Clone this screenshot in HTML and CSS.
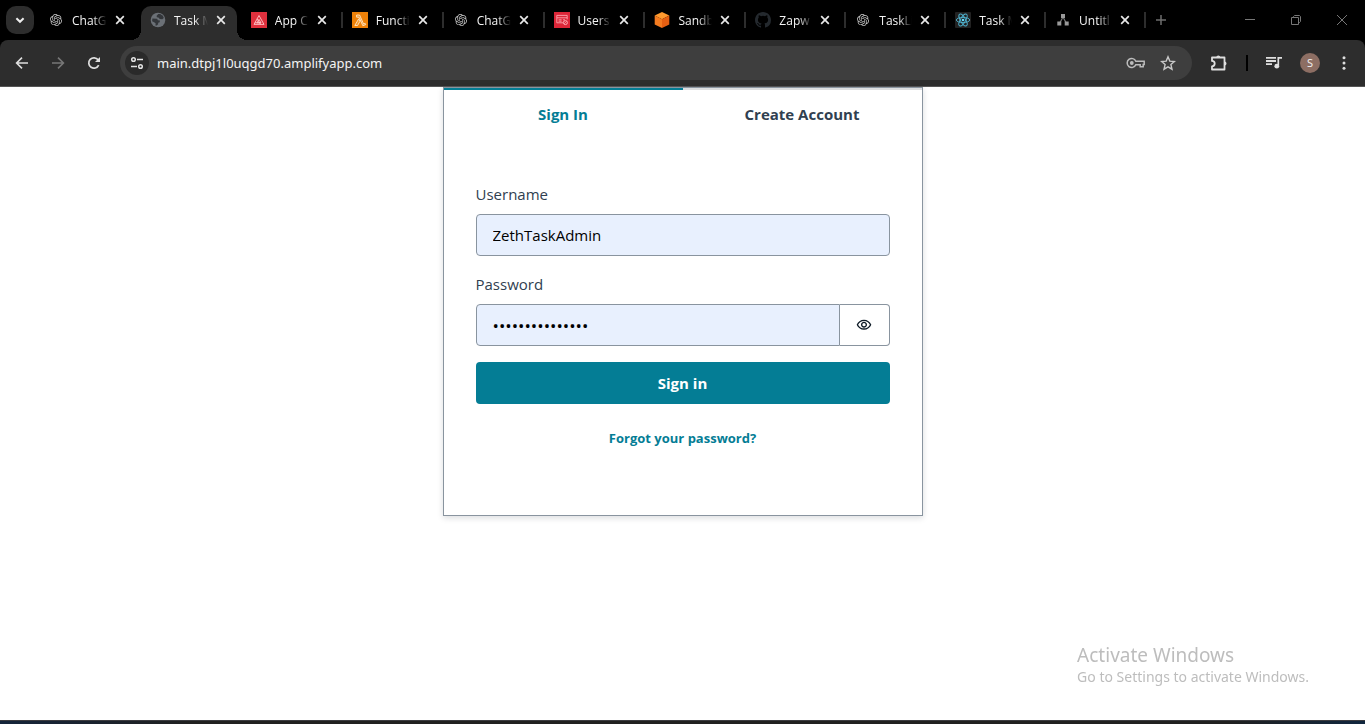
FILE: index.html
```
<!DOCTYPE html>
<html lang="en">
<head>
<meta charset="utf-8">
<title>Task Manager</title>
<link rel="stylesheet" href="styles.css">
</head>
<body>
<svg class="defs" aria-hidden="true">
  <symbol id="close" viewBox="0 0 10 10"><path d="M1.2 1.2l7.6 7.6M8.8 1.2L1.2 8.8" stroke="#e8e8e8" stroke-width="1.7" fill="none"/></symbol>
  <symbol id="knot" viewBox="0 0 24 24"><path fill="#c4c4c4" d="M22.28 9.82a5.98 5.98 0 0 0-.52-4.91 6.05 6.05 0 0 0-6.51-2.9A6.07 6.07 0 0 0 4.98 4.18a5.98 5.98 0 0 0-4 2.9 6.05 6.05 0 0 0 .74 7.1 5.98 5.98 0 0 0 .51 4.91 6.05 6.05 0 0 0 6.52 2.9A5.98 5.98 0 0 0 13.26 24a6.06 6.06 0 0 0 5.77-4.21 5.99 5.99 0 0 0 4-2.9 6.06 6.06 0 0 0-.75-7.07zm-9.02 12.61a4.48 4.48 0 0 1-2.88-1.04l.14-.08 4.78-2.76a.79.79 0 0 0 .39-.68v-6.74l2.02 1.17c.02.01.04.03.04.05v5.58a4.5 4.5 0 0 1-4.49 4.5zM3.6 18.3a4.47 4.47 0 0 1-.54-3.01l.14.09 4.78 2.76a.77.77 0 0 0 .78 0l5.84-3.37v2.33a.08.08 0 0 1-.03.06L9.74 19.95a4.5 4.5 0 0 1-6.14-1.65zM2.34 7.9a4.49 4.49 0 0 1 2.37-1.98v5.68a.77.77 0 0 0 .39.68l5.81 3.35-2.02 1.17a.08.08 0 0 1-.07 0L4 14.01A4.5 4.5 0 0 1 2.34 7.87zm16.6 3.86l-5.84-3.39L15.12 7.2a.08.08 0 0 1 .07 0l4.83 2.79a4.49 4.49 0 0 1-.68 8.1v-5.68a.79.79 0 0 0-.4-.65zm2.01-3.02l-.14-.09-4.77-2.78a.78.78 0 0 0-.79 0L9.41 9.23V6.9a.07.07 0 0 1 .03-.06l4.83-2.79a4.5 4.5 0 0 1 6.68 4.66zM8.31 12.86l-2.02-1.16a.08.08 0 0 1-.04-.06V6.07a4.5 4.5 0 0 1 7.38-3.45l-.14.08L8.7 5.46a.79.79 0 0 0-.39.68zm1.1-2.36L12 9l2.6 1.5v3L12 15l-2.6-1.5z"/></symbol>
</svg>

<header class="chrome">
  <div class="tabstrip">
    <button class="tab-search" aria-label="Search tabs"><svg width="10" height="8" viewBox="0 0 10 8"><path d="M1.4 2.2L5 5.8l3.6-3.6" fill="none" stroke="#eee" stroke-width="2"/></svg></button>
    <nav class="tabs" aria-label="Open tabs">
      <div class="tab before-active"><svg class="favicon knot"><use href="#knot"/></svg><button class="tab-label">ChatG</button><button class="tab-close" aria-label="Close tab"><svg><use href="#close"/></svg></button></div>
      <div class="tab active"><svg class="favicon" viewBox="0 0 16 16"><circle cx="8" cy="8" r="7.3" fill="#6b7076"/><path fill="#33363a" d="M2.4 6.6l4.7.1.8 1.6 2 .2-.2 1.8-1.5.4-.1 1.5-1.3 1.4-1.3-.2.1-2.2-1.5-1-2-.9zM8.2 2.1h2l2.7 1.6.9 2.2-1.5 1.3-2.6-.3-.9-1.2-1.8-.4-.5-1.3z"/></svg><button class="tab-label">Task M</button><button class="tab-close" aria-label="Close tab"><svg><use href="#close"/></svg></button></div>
      <div class="tab"><svg class="favicon" viewBox="0 0 16 16"><path fill="#df303d" d="M0 0h16v16H0z"/><path d="M8 3.5L3 12.4h10zM8 7.4l-2 3.4h4zM6.2 6.8l3.3 5.6M3.9 10.8h6" fill="none" stroke="#ffc5c8" stroke-width=".9"/></svg><button class="tab-label">App C</button><button class="tab-close" aria-label="Close tab"><svg><use href="#close"/></svg></button></div>
      <div class="tab"><svg class="favicon" viewBox="0 0 16 16"><path fill="#ee8108" d="M0 0h16v16H0z"/><path d="M4.6 3h3l4 9 1.6-.6.5 1.3-2.9 1L7 5.2H4.6zM6.7 6.8l1.2 2.6L5.6 13.5H2.8z" fill="#f59a30" stroke="#fff0db" stroke-width=".8"/></svg><button class="tab-label">Functi</button><button class="tab-close" aria-label="Close tab"><svg><use href="#close"/></svg></button></div>
      <div class="tab"><svg class="favicon knot"><use href="#knot"/></svg><button class="tab-label">ChatG</button><button class="tab-close" aria-label="Close tab"><svg><use href="#close"/></svg></button></div>
      <div class="tab"><svg class="favicon" viewBox="0 0 16 16"><path fill="#dc2638" d="M0 0h16v16H0z"/><path d="M9 10.8H2.8V3.4h10.400v4M3 5.800h10M4.600 7.800h3M4.600 9.200h3M9 7.800h2" fill="none" stroke="#ffb5bd" stroke-width=".8"/><circle cx="11.400" cy="10.600" r="2" fill="none" stroke="#ffb5bd" stroke-width=".9"/><path d="M10.200 11.800l2.300-2.400" stroke="#ffb5bd" stroke-width=".7"/></svg><button class="tab-label">Users</button><button class="tab-close" aria-label="Close tab"><svg><use href="#close"/></svg></button></div>
      <div class="tab"><svg class="favicon" viewBox="0 0 16 16"><path fill="#ff9a2e" d="M8 0l7.3 3.6L8 7.2.7 3.6z"/><path fill="#f47b20" d="M.7 3.6L8 7.2V16L.7 12.4z"/><path fill="#e65f12" d="M15.3 3.6L8 7.2V16l7.3-3.6z"/></svg><button class="tab-label">Sandb</button><button class="tab-close" aria-label="Close tab"><svg><use href="#close"/></svg></button></div>
      <div class="tab"><svg class="favicon" viewBox="0 0 16 16"><path fill="#24292e" d="M8 0C3.58 0 0 3.58 0 8c0 3.54 2.29 6.53 5.47 7.59.4.07.55-.17.55-.38 0-.19-.01-.82-.01-1.49-2.01.37-2.53-.49-2.69-.94-.09-.23-.48-.94-.82-1.13-.28-.15-.68-.52-.01-.53.63-.01 1.08.58 1.23.82.72 1.21 1.87.87 2.33.66.07-.52.28-.87.51-1.07-1.78-.2-3.64-.89-3.64-3.95 0-.87.31-1.59.82-2.15-.08-.2-.36-1.02.08-2.12 0 0 .67-.21 2.2.82a7.6 7.6 0 0 1 4 0c1.53-1.04 2.2-.82 2.2-.82.44 1.1.16 1.92.08 2.12.51.56.82 1.27.82 2.15 0 3.07-1.87 3.75-3.65 3.95.29.25.54.73.54 1.48 0 1.07-.01 1.93-.01 2.2 0 .21.15.46.55.38A8.01 8.01 0 0 0 16 8c0-4.42-3.58-8-8-8z"/></svg><button class="tab-label">Zapw</button><button class="tab-close" aria-label="Close tab"><svg><use href="#close"/></svg></button></div>
      <div class="tab"><svg class="favicon knot"><use href="#knot"/></svg><button class="tab-label">TaskLi</button><button class="tab-close" aria-label="Close tab"><svg><use href="#close"/></svg></button></div>
      <div class="tab"><svg class="favicon" viewBox="0 0 16 16"><rect width="16" height="16" rx="1" fill="#222"/><g fill="none" stroke="#4fb3d0" stroke-width=".9"><ellipse cx="8" cy="8" rx="6.7" ry="2.6"/><ellipse cx="8" cy="8" rx="6.7" ry="2.6" transform="rotate(60 8 8)"/><ellipse cx="8" cy="8" rx="6.7" ry="2.6" transform="rotate(120 8 8)"/></g><circle cx="8" cy="8" r="1.3" fill="#61dafb"/></svg><button class="tab-label">Task M</button><button class="tab-close" aria-label="Close tab"><svg><use href="#close"/></svg></button></div>
      <div class="tab"><svg class="favicon" viewBox="0 0 16 16"><path d="M8 5L4.5 11.5M8 5l3.5 6.5" stroke="#777" stroke-width="1.2"/><path fill="#999" d="M6 2h4v4H6zM2.300 9.500h4v4h-4zM9.700 9.500h4v4h-4z"/></svg><button class="tab-label">Untitl</button><button class="tab-close" aria-label="Close tab"><svg><use href="#close"/></svg></button></div>
    </nav>
    <button class="new-tab" aria-label="New tab"><svg width="12" height="12" viewBox="0 0 12 12"><path d="M6 1v10M1 6h10" stroke="#6e6e6e" stroke-width="1.5"/></svg></button>
    <div class="window-controls">
      <button aria-label="Minimize"><svg width="12" height="12" viewBox="0 0 12 12"><path d="M1 5.5h10" stroke="#777"/></svg></button>
      <button aria-label="Restore"><svg width="12" height="12" viewBox="0 0 12 12"><path d="M1.5 3.5h7v7h-7zM3.5 3.5v-1l1-1h5l1 1v5l-1 1h-1" fill="none" stroke="#777"/></svg></button>
      <button aria-label="Close window"><svg width="12" height="12" viewBox="0 0 12 12"><path d="M1 1l10 10M11 1L1 11" stroke="#777"/></svg></button>
    </div>
  </div>

  <div class="toolbar">
    <div class="nav-buttons">
      <button aria-label="Back"><svg width="14" height="14" viewBox="0 0 14 14"><path d="M13 7H2M7 1.6L1.6 7 7 12.4" fill="none" stroke="#dedede" stroke-width="1.6"/></svg></button>
      <button aria-label="Forward"><svg width="14" height="14" viewBox="0 0 14 14"><path d="M1 7h11M7 1.6L12.4 7 7 12.4" fill="none" stroke="#777" stroke-width="1.6"/></svg></button>
      <button aria-label="Reload"><svg width="14" height="14" viewBox="0 0 14 14"><path d="M11.7 9.2a5.2 5.2 0 1 1-.6-5.4L12.3 5" fill="none" stroke="#dedede" stroke-width="1.7"/><path d="M13 1v5H8z" fill="#dedede"/></svg></button>
    </div>
    <div class="omnibox">
      <button class="site-info" aria-label="Site information"><svg width="14" height="14" viewBox="0 0 14 14"><g fill="none" stroke="#e3e3e3" stroke-width="1.5"><circle cx="3.5" cy="3.5" r="1.8"/><path d="M7 3.5h6M1 10.5h6"/><circle cx="10.5" cy="10.5" r="1.8"/></g></svg></button>
      <input class="address" type="text" aria-label="Address" value="main.dtpj1l0uqgd70.amplifyapp.com">
      <button aria-label="Passwords"><svg width="20" height="12" viewBox="0 0 20 12"><path d="M9.8 4.2H18.200v3.400h-1v2.200h-3V7.800H9.800A4.500 4.500 0 1 1 9.800 4.200z" fill="none" stroke="#bcbcbc" stroke-width="1.5"/><circle cx="5.8" cy="6" r="1.9" fill="#bcbcbc"/></svg></button>
      <button aria-label="Bookmark"><svg width="16" height="16" viewBox="0 0 16 16"><path d="M8 1.800l1.800 4.300 4.600.4-3.500 3.100 1.100 4.600L8 11.800l-4 2.400 1.100-4.600-3.500-3.100 4.600-.4z" fill="none" stroke="#c8c8c8" stroke-width="1.4"/></svg></button>
    </div>
    <div class="actions">
      <button aria-label="Extensions"><svg width="18" height="18" viewBox="0 0 18 18"><path d="M2 3.500h12.500v12H2v-3.200a2.700 2.700 0 0 0 0-5.400z" fill="none" stroke="#dedede" stroke-width="1.8" stroke-linejoin="round"/><path d="M6.300 3.500a2 2 0 0 1 4 0zM14.500 7.500a2 2 0 0 1 0 4z" fill="#dedede"/></svg></button>
      <span class="divider"></span>
      <button aria-label="Media controls"><svg width="16" height="14" viewBox="0 0 16 14"><path d="M0 1.800h10M0 5h10M0 8.200h6M12 1.800h4" stroke="#dedede" stroke-width="1.8"/><path d="M12.300 1v8.800" stroke="#dedede" stroke-width="1.7"/><circle cx="10.800" cy="10.200" r="2.400" fill="#dedede"/></svg></button>
      <button class="avatar" aria-label="Profile">S</button>
      <button class="menu" aria-label="Menu"><svg width="4" height="14" viewBox="0 0 4 14"><g fill="#dedede"><circle cx="2" cy="1.7" r="1.5"/><circle cx="2" cy="7" r="1.5"/><circle cx="2" cy="12.3" r="1.5"/></g></svg></button>
    </div>
  </div>
</header>

<main class="page">
  <section class="auth-card">
    <div class="auth-tabs" role="tablist">
      <button class="auth-tab selected" role="tab" aria-selected="true">Sign In</button>
      <button class="auth-tab" role="tab" aria-selected="false">Create Account</button>
    </div>
    <form class="auth-form">
      <div class="field">
        <label for="username">Username</label>
        <input class="text-input" id="username" type="text" value="ZethTaskAdmin">
      </div>
      <div class="field">
        <label for="password">Password</label>
        <div class="password-row">
          <input class="text-input" id="password" type="password" value="taskpassword123">
          <button class="reveal" type="button" aria-label="Show password"><svg width="16" height="16" viewBox="0 0 24 24"><path fill="#0d1a26" d="M12 6c3.79 0 7.17 2.13 8.82 5.5C19.17 14.87 15.79 17 12 17s-7.17-2.13-8.82-5.5C4.83 8.13 8.21 6 12 6m0-2C7 4 2.73 7.11 1 11.5 2.73 15.89 7 19 12 19s9.27-3.11 11-7.5C21.27 7.11 17 4 12 4zm0 5a2.5 2.5 0 0 1 0 5 2.5 2.5 0 0 1 0-5m0-2c-2.48 0-4.5 2.02-4.5 4.5S9.52 16 12 16s4.5-2.02 4.5-4.5S14.48 7 12 7z"/></svg></button>
        </div>
      </div>
      <button class="submit" type="button">Sign in</button>
    </form>
    <div class="auth-footer"><button class="forgot" type="button">Forgot your password?</button></div>
  </section>
</main>

<aside class="watermark">
  <p class="watermark-title">Activate Windows</p>
  <p class="watermark-text">Go to Settings to activate Windows.</p>
</aside>
<footer class="taskbar-edge"></footer>
</body>
</html>
```
FILE: styles.css
```
* { box-sizing: border-box; }
body {
  margin: 0;
  min-height: 100vh;
  display: flex;
  flex-direction: column;
  background: #fff;
  font-family: "Open Sans", "Noto Sans", sans-serif;
  font-size: 15px;
  line-height: 24px;
}
button, input { font: inherit; }
button { padding: 0; border: 0; background: none; color: inherit; cursor: pointer; }
svg { display: block; flex: none; }
.defs { position: absolute; width: 0; height: 0; }

/* Browser window */
.chrome { background: #000; color: #f4f4f4; }
.tabstrip { display: flex; align-items: stretch; height: 40px; }
.tab-search {
  display: grid;
  place-items: center;
  width: 28px;
  height: 28px;
  margin: 6px;
  border-radius: 10px;
  background: #2d2d2d;
}
.tabs {
  flex: 1;
  min-width: 0;
  display: grid;
  grid-template-columns: repeat(7, minmax(0, 101fr)) repeat(4, minmax(0, 100fr));
}
.tab {
  position: relative;
  display: flex;
  align-items: center;
  gap: 8px;
  margin-top: 6px;
  padding: 0 16px 6px 9px;
}
.tab::after {
  content: "";
  position: absolute;
  top: 6px;
  right: 0;
  width: 2px;
  height: 16px;
  background: #2d2d2d;
}
.before-active { padding-left: 8px; }
.before-active::after { display: none; }
.active {
  margin-right: 5px;
  padding-right: 11px;
  border-radius: 10px 10px 0 0;
  background: #2d2d2d;
}
.active::before, .active::after {
  content: "";
  position: absolute;
  top: auto;
  bottom: 0;
  width: 10px;
  height: 10px;
}
.active::before { right: 100%; background: radial-gradient(circle at 0 0, transparent 10px, #2d2d2d 10px); }
.active::after { right: auto; left: 100%; background: radial-gradient(circle at 100% 0, transparent 10px, #2d2d2d 10px); }
.favicon { width: 16px; height: 16px; }
.knot { width: 12px; height: 12px; margin: 0 2px; }
.tab-label {
  flex: 1;
  min-width: 0;
  padding-top: 2px;
  overflow: hidden;
  white-space: nowrap;
  text-align: left;
  font-size: 12px;
  line-height: 16px;
  -webkit-mask-image: linear-gradient(to right, #000 60%, transparent 100%);
  mask-image: linear-gradient(to right, #000 60%, transparent 100%);
}
.tab-close svg { width: 10px; height: 10px; }
.new-tab { width: 30px; display: grid; place-items: center; }
.window-controls { display: grid; grid-template-columns: repeat(3, 46px); margin-left: 51px; }
.window-controls button { display: grid; place-items: center; }

.toolbar {
  display: flex;
  align-items: center;
  height: 47px;
  border-radius: 8px 8px 0 0;
  border-bottom: 1px solid #555;
  background: #2d2d2d;
}
.nav-buttons { display: grid; grid-template-columns: repeat(3, 36px); padding: 0 8px 0 4px; }
.nav-buttons button { display: grid; place-items: center; height: 36px; }
.omnibox {
  flex: 1;
  display: flex;
  align-items: center;
  gap: 14px;
  height: 34px;
  padding: 0 16px 0 5px;
  border-radius: 17px;
  background: #3e3e3e;
}
.site-info { display: grid; place-items: center; width: 24px; height: 24px; border-radius: 50%; background: #2a2a2a; }
.address {
  flex: 1;
  min-width: 0;
  margin-left: -6px;
  padding: 0;
  border: 0;
  outline: 0;
  background: none;
  color: #f4f4f4;
  font-family: "Noto Sans", "Open Sans", sans-serif;
  font-size: 13px;
}
.actions { display: flex; align-items: center; gap: 18px; width: 173px; padding: 0 19px 0 18px; }
.divider { width: 2px; height: 16px; background: #000; }
.avatar { width: 20px; height: 20px; border-radius: 50%; background: #8d6e63; font-size: 11px; line-height: 20px; text-align: center; }
.menu { margin-left: auto; }

/* Sign-in page */
.page { flex: 1; }
.auth-card {
  width: 480px;
  max-width: 100%;
  margin: 0 auto;
  border: 1px solid #89949f;
  background: #fff;
  box-shadow: 0 2px 6px rgba(13, 26, 38, .15);
}
.auth-tabs { display: grid; grid-template-columns: 1fr 1fr; }
.auth-tab { height: 51px; padding-bottom: 2px; border-top: 2px solid #dcdee0; color: #304050; font-weight: 700; }
.auth-tab.selected { border-color: #047d95; color: #047d95; }
.auth-form { display: flex; flex-direction: column; gap: 16px; padding: 43px 32px 0; }
.field { display: flex; flex-direction: column; gap: 8px; color: #304050; }
.text-input {
  width: 100%;
  min-width: 0;
  height: 42px;
  padding: 0 16px;
  border: 1px solid #89949f;
  border-radius: 4px;
  outline: 0;
  background: #e8f0fe;
  color: #000;
}
.password-row { display: flex; }
.password-row .text-input { flex: 1; border-radius: 4px 0 0 4px; font-size: 17px; }
.reveal {
  display: grid;
  place-items: center;
  width: 50px;
  border: 1px solid #89949f;
  border-left: 0;
  border-radius: 0 4px 4px 0;
}
.submit { height: 42px; border-radius: 4px; background: #047d95; color: #fff; font-weight: 700; }
.auth-footer { padding: 16px 32px 59px; text-align: center; }
.forgot { height: 36px; color: #047d95; font-size: 13px; font-weight: 700; }

/* System overlays */
.watermark { position: fixed; right: 56px; bottom: 37px; color: #bdbdbd; font-family: "Noto Sans", "Open Sans", sans-serif; }
.watermark p { margin: 0; }
.watermark-title { font-size: 19px; line-height: 24px; }
.watermark-text { font-size: 14px; line-height: 20px; }
.taskbar-edge { height: 4px; border-top: 1px solid #3c3c40; background: linear-gradient(to right, #14243a, #202020 14%, #202020 90%, #10263e); }
```
